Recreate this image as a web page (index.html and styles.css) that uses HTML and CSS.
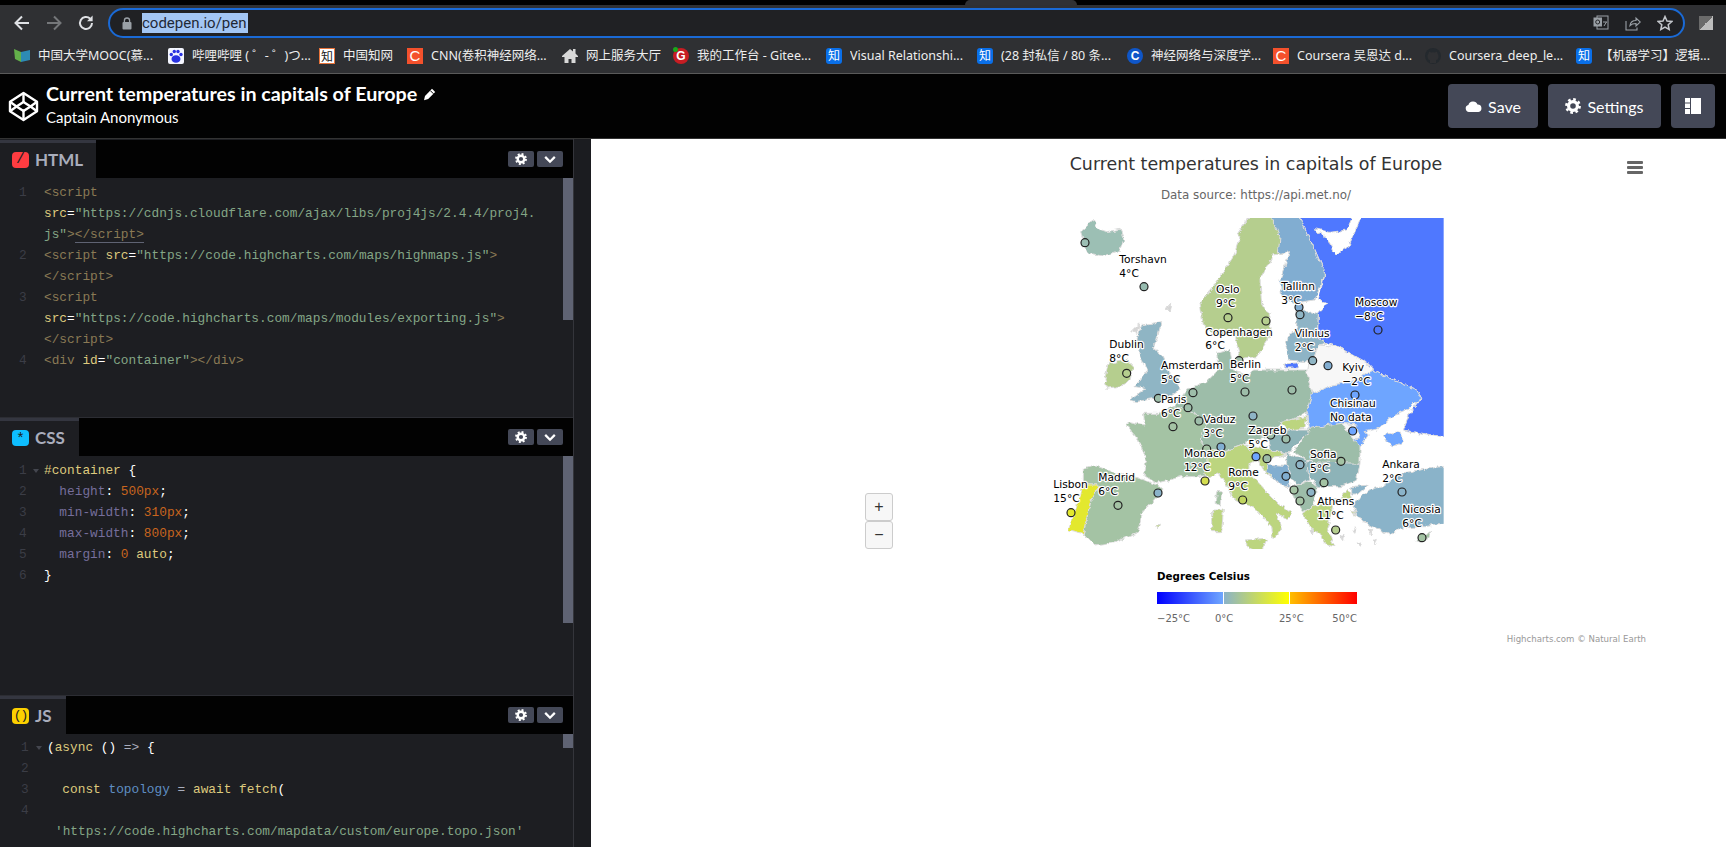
FILE: index.html
```html
<!DOCTYPE html>
<html lang="en">
<head>
<meta charset="utf-8">
<title>CodePen - Current temperatures in capitals of Europe</title>
<link rel="stylesheet" href="styles.css">
</head>
<body>
<svg class="defs" aria-hidden="true">
  <symbol id="gear" viewBox="0 0 16 16">
    <circle cx="8" cy="8" r="4.4" fill="none" stroke="currentColor" stroke-width="3.2"/>
    <circle cx="8" cy="8" r="6.6" fill="none" stroke="currentColor" stroke-width="2.6" stroke-dasharray="2.6 2.58"/>
  </symbol>
  <symbol id="chev" viewBox="0 0 16 10">
    <path d="M2.5 2 8 7.5 13.5 2" fill="none" stroke="currentColor" stroke-width="2.6"/>
  </symbol>
  <filter id="rough" x="-5%" y="-5%" width="110%" height="110%">
    <feTurbulence type="fractalNoise" baseFrequency="0.055" numOctaves="3" seed="4" result="n"/>
    <feDisplacementMap in="SourceGraphic" in2="n" scale="16" xChannelSelector="R" yChannelSelector="G"/>
  </filter>
  <clipPath id="mapclip"><rect x="0" y="234" width="1211" height="993"/></clipPath>
</svg>

<div class="tabstrip"><div class="active-tab"></div></div>

<div class="toolbar">
  <div class="nav-btn"><svg width="18" height="18" viewBox="0 0 18 18"><path d="M16 9H3M9 2.5 2.5 9 9 15.5" fill="none" stroke="#dfe1e5" stroke-width="2"/></svg></div>
  <div class="nav-btn"><svg width="18" height="18" viewBox="0 0 18 18"><path d="M2 9h13M9 2.5 15.5 9 9 15.5" fill="none" stroke="#75777a" stroke-width="2"/></svg></div>
  <div class="nav-btn"><svg width="18" height="18" viewBox="0 0 18 18"><path d="M15 9a6 6 0 1 1-1.8-4.3" fill="none" stroke="#dfe1e5" stroke-width="2"/><path d="M15.6 1.6v5.6H10z" fill="#dfe1e5"/></svg></div>
  <div class="omnibox">
    <svg class="lock" width="10" height="13" viewBox="0 0 10 13"><path d="M2.4 5V3.6a2.6 2.6 0 0 1 5.2 0V5" fill="none" stroke="#9aa0a6" stroke-width="1.3"/><rect x="0.5" y="5" width="9" height="7.5" rx="1" fill="#9aa0a6"/></svg>
    <span class="url">codepen.io/pen</span>
    <svg class="omni-icon" width="16" height="16" viewBox="0 0 16 16"><rect x="4" y="1" width="11" height="13" fill="none" stroke="#9aa0a6"/><rect x="0.5" y="2.5" width="8.5" height="9" fill="#9aa0a6"/><circle cx="4.7" cy="7" r="2" fill="none" stroke="#26272a"/><path d="M10 7h4M11 11l2.500-4" stroke="#9aa0a6"/></svg>
    <svg class="omni-icon" width="16" height="16" viewBox="0 0 16 16"><path d="M5 10.500c.5-3.500 3-5 6-5V3l4.300 4L11 11V8.500c-2.500 0-4.500.4-6 2zM1 6v9h11v-2.500" fill="none" stroke="#9aa0a6" stroke-width="1.100"/></svg>
    <svg class="omni-icon" width="16" height="16" viewBox="0 0 16 16"><path d="m8 1.500 2 4.500 4.800.5-3.600 3.200 1 4.800L8 12.100l-4.200 2.400 1-4.800L1.200 6.500 6 6z" fill="none" stroke="#c4c7cc" stroke-width="1.500"/></svg>
  </div>
  <div class="profile"></div>
</div>

<div class="bookmarks">
  <div class="bm"><svg class="fav" viewBox="0 0 16 16"><path d="M0 1 7 4v10L1 11z" fill="#63b04a"/><path d="M7 4l9-2v10l-9 2z" fill="#2d8bb5"/></svg><span class="bm-text">中国大学MOOC(慕...</span></div>
  <div class="bm"><svg class="fav" viewBox="0 0 16 16"><rect width="16" height="16" rx="2" fill="#f4f6ff"/><ellipse cx="8" cy="11" rx="4.500" ry="3.800" fill="#2932e1"/><circle cx="3.300" cy="6.500" r="1.700" fill="#2932e1"/><circle cx="6.300" cy="3.500" r="1.700" fill="#2932e1"/><circle cx="10" cy="3.500" r="1.700" fill="#2932e1"/><circle cx="13" cy="6.500" r="1.700" fill="#2932e1"/></svg><span class="bm-text">哔哩哔哩 ( ゜- ゜)つ...</span></div>
  <div class="bm"><span class="fav glyph fav-cnki">知</span><span class="bm-text">中国知网</span></div>
  <div class="bm"><span class="fav glyph fav-c">C</span><span class="bm-text">CNN(卷积神经网络...</span></div>
  <div class="bm"><svg class="fav" viewBox="0 0 16 16"><path d="M11 1h2.500v4.500L16 8v1h-2.500v6h-4v-4h-3v4h-4V9H0V8l8-7 3 2.500z" fill="#d8d8d8"/></svg><span class="bm-text">网上服务大厅</span></div>
  <div class="bm"><span class="fav glyph fav-g">G</span><span class="bm-text">我的工作台 - Gitee...</span></div>
  <div class="bm"><span class="fav glyph fav-zhi">知</span><span class="bm-text">Visual Relationshi...</span></div>
  <div class="bm"><span class="fav glyph fav-zhi">知</span><span class="bm-text">(28 封私信 / 80 条...</span></div>
  <div class="bm"><span class="fav glyph fav-cblue">C</span><span class="bm-text">神经网络与深度学...</span></div>
  <div class="bm"><span class="fav glyph fav-c">C</span><span class="bm-text">Coursera 吴恩达 d...</span></div>
  <div class="bm"><svg class="fav" viewBox="0 0 16 16"><circle cx="8" cy="8" r="8" fill="#24292e"/><path d="M5 15v-3c-1.500 0-2.500-1-2.500-4 0-1 .3-1.800 1-2.500L4 3.500l2 1a7 7 0 0 1 4 0l2-1 .5 2c.7.700 1 1.500 1 2.500 0 3-1 4-2.500 4v3z" fill="#2f3033"/></svg><span class="bm-text">Coursera_deep_le...</span></div>
  <div class="bm"><span class="fav glyph fav-zhi">知</span><span class="bm-text">【机器学习】逻辑...</span></div>
</div>

<header class="pen-header">
  <svg class="logo" width="31" height="31" viewBox="0 0 31 31"><g fill="none" stroke="#fff" stroke-width="2.400" stroke-linejoin="round"><path d="M15.500 2 29 10.800v9.400L15.500 29 2 20.200v-9.400z"/><path d="M15.500 11 22.500 15.500 15.500 20 8.500 15.500z"/><path d="M15.500 2v9M15.500 20v9M2 10.800l6.500 4.700M29 10.800l-6.500 4.700M2 20.200l6.500-4.700M29 20.200l-6.500-4.700"/></g></svg>
  <div class="pen-info">
    <h1 class="pen-title">Current temperatures in capitals of Europe <svg class="pencil" width="13" height="13" viewBox="0 0 13 13"><path d="M9 .8 12.200 4l-7 7L1 12.200 2 8z" fill="#fff"/><path d="M7.300 2.600 10.500 5.800" stroke="#000"/></svg></h1>
    <div class="pen-owner">Captain Anonymous</div>
  </div>
  <div class="pen-actions">
    <button class="pen-btn btn-save"><svg width="17" height="11" viewBox="0 0 17 11"><path d="M4 11a3.500 3.500 0 0 1-.6-6.900A4.800 4.800 0 0 1 12.500 3.500 3.800 3.800 0 0 1 13.500 11z" fill="#fff"/></svg>Save</button>
    <button class="pen-btn btn-settings"><svg width="16" height="16" class="icon-white"><use href="#gear"/></svg>Settings</button>
    <button class="pen-btn btn-layout"><svg width="16" height="16" viewBox="0 0 16 16"><path d="M0 0h5v4.500H0zM0 5.500h5v4.500H0zM0 11h5v5H0zM6 0h10v16H6z" fill="#fff"/></svg></button>
  </div>
</header>

<main class="pen-main">
  <section class="editors">
    <div class="panel panel-html">
      <div class="strip">
        <div class="tab tab-html"><span class="lang lang-html">/</span>HTML</div>
        <div class="panel-btns"><span class="mini"><svg width="12" height="12"><use href="#gear"/></svg></span><span class="mini"><svg width="14" height="9"><use href="#chev"/></svg></span></div>
      </div>
      <div class="body">
        <div class="thumb thumb-html"></div>
        <div class="row"><span class="num">1</span><code class="code"><span class="t">&lt;script</span></code></div>
        <div class="row"><span class="num"></span><code class="code"><span class="a">src</span><span class="p">=</span><span class="s">"https://cdnjs.cloudflare.com/ajax/libs/proj4js/2.4.4/proj4.</span></code></div>
        <div class="row"><span class="num"></span><code class="code"><span class="s">js"</span><span class="t">&gt;<span class="match">&lt;/script&gt;</span></span></code></div>
        <div class="row"><span class="num">2</span><code class="code"><span class="t">&lt;script</span> <span class="a">src</span><span class="p">=</span><span class="s">"https://code.highcharts.com/maps/highmaps.js"</span><span class="t">&gt;</span></code></div>
        <div class="row"><span class="num"></span><code class="code"><span class="t">&lt;/script&gt;</span></code></div>
        <div class="row"><span class="num">3</span><code class="code"><span class="t">&lt;script</span></code></div>
        <div class="row"><span class="num"></span><code class="code"><span class="a">src</span><span class="p">=</span><span class="s">"https://code.highcharts.com/maps/modules/exporting.js"</span><span class="t">&gt;</span></code></div>
        <div class="row"><span class="num"></span><code class="code"><span class="t">&lt;/script&gt;</span></code></div>
        <div class="row"><span class="num">4</span><code class="code"><span class="t">&lt;div</span> <span class="a">id</span><span class="p">=</span><span class="s">"container"</span><span class="t">&gt;&lt;/div&gt;</span></code></div>
      </div>
    </div>

    <div class="panel panel-css">
      <div class="strip">
        <div class="tab tab-css"><span class="lang lang-css">*</span>CSS</div>
        <div class="panel-btns"><span class="mini"><svg width="12" height="12"><use href="#gear"/></svg></span><span class="mini"><svg width="14" height="9"><use href="#chev"/></svg></span></div>
      </div>
      <div class="body">
        <div class="thumb thumb-css"></div>
        <div class="row"><span class="num">1</span><span class="fold"></span><code class="code"><span class="a">#container</span> <span class="p">{</span></code></div>
        <div class="row"><span class="num">2</span><code class="code">  <span class="k">height</span><span class="p">:</span> <span class="n">500px</span><span class="p">;</span></code></div>
        <div class="row"><span class="num">3</span><code class="code">  <span class="k">min-width</span><span class="p">:</span> <span class="n">310px</span><span class="p">;</span></code></div>
        <div class="row"><span class="num">4</span><code class="code">  <span class="k">max-width</span><span class="p">:</span> <span class="n">800px</span><span class="p">;</span></code></div>
        <div class="row"><span class="num">5</span><code class="code">  <span class="k">margin</span><span class="p">:</span> <span class="n">0</span> <span class="a">auto</span><span class="p">;</span></code></div>
        <div class="row"><span class="num">6</span><code class="code"><span class="p">}</span></code></div>
      </div>
    </div>

    <div class="panel panel-js">
      <div class="strip">
        <div class="tab tab-js"><span class="lang lang-js">()</span>JS</div>
        <div class="panel-btns"><span class="mini"><svg width="12" height="12"><use href="#gear"/></svg></span><span class="mini"><svg width="14" height="9"><use href="#chev"/></svg></span></div>
      </div>
      <div class="body body-js">
        <div class="thumb thumb-js"></div>
        <div class="row"><span class="num">1</span><span class="fold"></span><code class="code"><span class="p">(</span><span class="a">async</span> <span class="p">()</span> <span class="o">=&gt;</span> <span class="p">{</span></code></div>
        <div class="row"><span class="num">2</span><code class="code"></code></div>
        <div class="row"><span class="num">3</span><code class="code">  <span class="a">const</span> <span class="v">topology</span> <span class="o">=</span> <span class="a">await fetch</span><span class="p">(</span></code></div>
        <div class="row"><span class="num">4</span><code class="code"></code></div>
        <div class="row"><span class="num"></span><code class="code wrapped"><span class="s">'https://code.highcharts.com/mapdata/custom/europe.topo.json'</span></code></div>
      </div>
    </div>
  </section>

  <div class="resizer"></div>

  <section class="preview">
    <div class="chart">
      <button class="menu" aria-label="Chart menu"><span></span><span></span><span></span></button>
      <div class="zoom-ctl"><button class="zoom-btn">+</button><button class="zoom-btn">−</button></div>
      <h2 class="chart-title">Current temperatures in capitals of Europe</h2>
      <div class="chart-sub">Data source: https://api.met.no/</div>

      <svg class="map" width="420" height="331" viewBox="0 234 1260 993">
        <g clip-path="url(#mapclip)">
        <g filter="url(#rough)">
        <g class="lands">
          <path fill="#d6d6d6" d="M590 285 610 255 640 225 620 280ZM378 505 392 490 388 515ZM272 575 300 548 292 580ZM625 225 660 245 640 262 615 250Z"/>
          <path fill="#9cbfb4" d="M122 275 135 265 150 240 165 245 170 265 200 275 240 268 252 300 240 330 190 348 150 340 125 315 130 300Z"/>
          <path fill="#5078ff" d="M770 215H1235V895L1090 870 1110 820 1145 775 1130 750 1060 720 1000 690 975 665 895 620 860 610 832 590 835 520 860 490 835 480 855 400 825 330Z"/>
          <path fill="#fff" stroke="#fff" d="M820 265 870 277 920 270 945 215 972 215 945 275 925 320 885 345 865 300Z"/>
          <path fill="#b5ce8e" d="M590 285 640 220 690 215 730 290 752 335 700 345 660 420 665 490 690 530 690 590 650 650 600 655 590 610 585 585 530 590 490 555 480 490 520 440 580 350 600 290Z"/>
          <path fill="#81add1" d="M685 215H770L825 330 855 400 825 480 760 490 725 470 720 420 745 350 752 335 715 340 720 290Z"/>
          <path fill="#8eb4c6" d="M770 510 835 520 832 590 860 610 835 615 820 660 800 665 745 660 735 620 745 590 770 570Z"/>
          <path fill="#5078ff" d="M730 672 775 668 775 684 735 684Z"/>
          <path fill="#f7f7f7" stroke="#f7f7f7" d="M835 615 895 620 975 665 1000 690 950 720 880 735 815 760 805 720 800 690 805 660 820 660Z"/>
          <path fill="#8fb5c4" d="M305 555 365 545 350 600 340 625 370 650 385 700 415 720 420 750 390 770 345 775 290 785 270 780 320 745 285 740 320 690 300 650 290 600Z"/>
          <path fill="#b5ce8e" d="M205 670 260 660 280 680 270 720 255 735 200 745 195 715Z"/>
          <path fill="#9dbda9" d="M535 690 530 640 570 630 580 690 630 705 640 690H800L805 720 815 760 800 820 720 855 680 890 620 905 610 915 550 935 500 925 480 900 500 850 480 830 440 810 400 800 440 750 470 740 500 725Z"/>
        </g>
        <g class="lands" transform="translate(0,690)">
          <path fill="#6ea5ff" d="M815 70 880 45 950 30 1000 0 1060 30 1130 60 1145 85 1110 115 1060 135 1020 175 975 185 985 195 960 232 945 232 945 200 950 165 905 160 805 178 800 130Z"/>
          <path fill="#f7f7f7" stroke="#f7f7f7" d="M905 160 950 165 958 205 935 205Z"/>
          <path fill="#6ea5ff" d="M1030 195 1075 185 1090 215 1060 230 1040 215Z"/>
          <path fill="#a4c3a4" d="M310 130 355 130 400 110 440 120 480 140 500 160 480 210 500 235 505 280 510 315 470 320 420 320 390 330 350 340 310 315 320 270 295 210 260 165 270 155 315 165Z"/>
          <path fill="#a4c3a4" d="M130 295 160 285 230 310 300 325 350 345 370 360 340 395 310 420 290 490 225 515 165 525 130 490 150 400 175 345 130 345Z"/>
          <path fill="#e3e82e" d="M130 345H175L150 400 130 490 85 480 110 410Z"/>
          <path fill="#bcd57f" d="M500 235 550 245 610 225 650 235 665 260 630 280 630 310 680 365 720 405 755 430 740 445 710 430 725 480 700 505 695 470 650 420 580 385 540 310 510 320 490 310 505 280Z"/>
          <path fill="#bcd57f" d="M615 510 680 505 665 545 630 540ZM515 420 550 420 545 485 515 485Z"/>
          <path fill="#a4c3a4" d="M530 365 545 365 540 405 525 400Z"/>
          <path fill="#bcd57f" d="M720 155 800 140 795 175 740 180Z"/>
          <path fill="#8eb4b8" d="M680 190 740 180 810 180 760 230 740 255 690 240Z"/>
          <path fill="#bcd57f" d="M615 225 670 235 740 255 680 265 680 290 745 355 680 310 650 260Z"/>
          <path fill="#9dbda9" d="M810 175 905 160 960 230 960 280 880 285 800 270 760 245Z"/>
          <path fill="#8db3b8" d="M740 250 800 270 810 330 770 345 740 300Z"/>
          <path fill="#8db3b8" d="M800 275 960 280 950 330 900 350 830 350 805 310Z"/>
          <path fill="#82aed0" d="M680 285 745 290 750 350 715 340 680 300Z"/>
          <path fill="#9dbda9" d="M750 350 810 335 830 350 820 410 790 425 760 380Z"/>
          <path fill="#bcd57f" d="M820 410 900 385 925 360 935 385 880 395 870 450 860 480 885 530 860 525 840 490 810 470 790 430Z"/>
          <path fill="#bcd57f" d="M935 425 950 425 945 440ZM350 470 358 465 355 480Z"/>
          <path fill="#d6d6d6" d="M900 500 912 495 908 512ZM935 480 948 472 945 490ZM985 480 998 478 992 495ZM1000 510 1012 505 1005 525ZM950 520 965 515 960 530ZM810 480 822 478 815 495Z"/>
          <path fill="#8ab3c9" d="M940 395 1000 355 1030 350 1080 310 1235 285V460L1150 470 1080 475 1050 495 1000 470 950 440ZM935 350 985 345 950 375 935 375Z"/>
          <path fill="#a4c3a4" d="M1125 515 1165 490 1175 480 1160 510 1140 520Z"/>
        </g>
        </g>
        </g>
        <g class="pins">
          <circle cx="135" cy="308" fill="#9cbfb4"/><circle cx="312" cy="440" fill="#97bcb0"/>
          <circle cx="564" cy="533" fill="#b5ce8e"/><circle cx="678" cy="543" fill="#b5ce8e"/>
          <circle cx="777" cy="502" fill="#81add1"/><circle cx="780" cy="524" fill="#8fb5c4"/>
          <circle cx="1014" cy="570" fill="#5078ff"/><circle cx="818" cy="662" fill="#8fb5c4"/>
          <circle cx="864" cy="677" fill="#81add1"/><circle cx="260" cy="700" fill="#b5ce8e"/>
          <circle cx="597" cy="662" fill="#9dbda9"/>
        </g>
        <g class="pins" transform="translate(0,690)">
          <circle cx="459" cy="68" fill="#9dbda9"/><circle cx="615" cy="66" fill="#9dbda9"/>
          <circle cx="756" cy="60" fill="#9dbda9"/><circle cx="945" cy="75" fill="#6ea5ff"/>
          <circle cx="355" cy="85" fill="#9dbda9"/><circle cx="444" cy="113" fill="#9dbda9"/>
          <circle cx="477" cy="153" fill="#9dbda9"/><circle cx="639" cy="138" fill="#8eb4c6"/>
          <circle cx="399" cy="170" fill="#a4c3a4"/><circle cx="938" cy="183" fill="#6ea5ff"/>
          <circle cx="738" cy="207" fill="#9dbda9"/><circle cx="692" cy="195" fill="#9dbda9"/>
          <circle cx="500" cy="237" fill="#a4c3a4"/><circle cx="543" cy="231" fill="#81add1"/>
          <circle cx="648" cy="260" fill="#6ea5ff"/><circle cx="681" cy="266" fill="#9dbda9"/>
          <circle cx="903" cy="274" fill="#a4c3a4"/><circle cx="780" cy="284" fill="#8eb4c6"/>
          <circle cx="738" cy="319" fill="#81add1"/><circle cx="852" cy="338" fill="#a4c3a4"/>
          <circle cx="495" cy="333" fill="#d4dd4f"/><circle cx="1086" cy="366" fill="#8ab3c9"/>
          <circle cx="354" cy="369" fill="#8ab3c9"/><circle cx="813" cy="367" fill="#8eb4c6"/>
          <circle cx="762" cy="360" fill="#a4c3a4"/><circle cx="780" cy="393" fill="#a4c3a4"/>
          <circle cx="608" cy="390" fill="#c0d560"/><circle cx="234" cy="406" fill="#a4c3a4"/>
          <circle cx="93" cy="428" fill="#e3e82e"/><circle cx="887" cy="480" fill="#b5ce8e"/>
          <circle cx="1146" cy="503" fill="#a4c3a4"/>
        </g>
        <g class="labels">
          <text x="238" y="368">Torshavn</text><text x="238" y="410">4°C</text>
          <text x="528" y="460">Oslo</text><text x="528" y="502">9°C</text>
          <text x="724" y="450">Tallinn</text><text x="724" y="492">3°C</text>
          <text x="945" y="497">Moscow</text><text x="945" y="539">−8°C</text>
          <text x="496" y="587">Copenhagen</text><text x="496" y="628">6°C</text>
          <text x="764" y="590">Vilnius</text><text x="764" y="632">2°C</text>
          <text x="208" y="625">Dublin</text><text x="208" y="667">8°C</text>
          <text x="363" y="686">Amsterdam</text><text x="363" y="728">5°C</text>
          <text x="570" y="683">Berlin</text><text x="570" y="725">5°C</text>
          <text x="907" y="692">Kyiv</text><text x="907" y="734">−2°C</text>
        </g>
        <g class="labels" transform="translate(0,690)">
          <text x="363" y="98">Paris</text><text x="363" y="140">6°C</text>
          <text x="490" y="158">Vaduz</text><text x="490" y="200">3°C</text>
          <text x="870" y="110">Chisinau</text><text x="870" y="152">No data</text>
          <text x="625" y="193">Zagreb</text><text x="625" y="235">5°C</text>
          <text x="432" y="260">Monaco</text><text x="432" y="302">12°C</text>
          <text x="810" y="265">Sofia</text><text x="810" y="307">5°C</text>
          <text x="1027" y="293">Ankara</text><text x="1027" y="335">2°C</text>
          <text x="565" y="317">Rome</text><text x="565" y="359">9°C</text>
          <text x="175" y="332">Madrid</text><text x="175" y="374">6°C</text>
          <text x="40" y="355">Lisbon</text><text x="40" y="397">15°C</text>
          <text x="832" y="406">Athens</text><text x="832" y="448">11°C</text>
          <text x="1087" y="430">Nicosia</text><text x="1087" y="472">6°C</text>
        </g>
      </svg>

      <div class="legend">
        <div class="legend-title">Degrees Celsius</div>
        <div class="legend-bar"></div>
        <div class="legend-labels"><span class="ll ll-a">−25°C</span><span class="ll ll-b">0°C</span><span class="ll ll-c">25°C</span><span class="ll ll-d">50°C</span></div>
      </div>
      <div class="credits">Highcharts.com © Natural Earth</div>
    </div>
  </section>
</main>
</body>
</html>
```
FILE: styles.css
```css
* { box-sizing: border-box; }
html, body { margin: 0; height: 847px; overflow: hidden; background: #000; }
body { font-family: "Noto Sans", "Noto Sans CJK SC", sans-serif; color: #fff; }
.defs { position: absolute; width: 0; height: 0; }

/* browser chrome */
.tabstrip { height: 5px; background: #000; }
.active-tab { width: 112px; height: 5px; margin-left: 965px; background: #303134; border-radius: 6px 6px 0 0; }
.toolbar { height: 35px; background: #2f3033; display: flex; align-items: flex-start; padding-left: 6px; }
.nav-btn { width: 32px; height: 30px; margin-top: 3px; display: flex; align-items: center; justify-content: center; }
.omnibox { flex: 1; height: 30px; margin: 3px 0 0 6px; border: 2px solid #1a6ad6; border-radius: 15px; background: #202124; display: flex; align-items: center; padding: 0 10px 0 12px; }
.lock { flex: none; margin-right: 10px; }
.url { flex: 0 0 106px; font: 15px/20px Roboto, sans-serif; color: #1f2937; background: #a3c6f4; white-space: nowrap; margin-right: auto; }
.omni-icon { flex: none; margin-left: 16px; }
.profile { width: 14px; height: 14px; margin: 11px 13px 0 14px; background: linear-gradient(135deg, #6b6b6b 50%, #bdbdbd 50%); }

.bookmarks { height: 34px; background: #2f3033; border-bottom: 1px solid #5a5a5a; padding: 0 0 1px 14px; display: grid; grid-template-columns: 154px 151px 88px 155px 111px 153px 151px 150px 146px 152px 151px 136px; align-items: center; }
.bm { display: flex; align-items: center; gap: 8px; min-width: 0; }
.fav { flex: none; width: 16px; height: 16px; }
.glyph { display: flex; align-items: center; justify-content: center; font-size: 12px; line-height: 16px; color: #fff; }
.fav-zhi { background: #0a6fe8; border-radius: 3px; }
.fav-c { background: #f4512c; font-family: "Liberation Sans", sans-serif; font-size: 15px; }
.fav-cblue { background: #0f56c8; border-radius: 50%; font-family: "Liberation Sans", sans-serif; font-weight: 700; font-size: 12px; }
.fav-g { position: relative; background: #c71d23; border-radius: 50%; font-family: "Liberation Sans", sans-serif; font-weight: 700; font-size: 12px; }
.fav-g::before { content: ""; position: absolute; left: 0; top: -1px; width: 5px; height: 5px; border-radius: 50%; background: #1aa81a; }
.fav-cnki { background: #fff; color: #222; border: 1px solid #e8743b; font-family: "Noto Sans CJK SC", sans-serif; }
.bm-text { font: 12.500px/16px "Noto Sans", "Noto Sans CJK SC", sans-serif; color: #eee; white-space: nowrap; overflow: hidden; }

/* pen header */
.pen-header { height: 65px; background: #020202; border-bottom: 1px solid #333; display: flex; padding-left: 8px; }
.logo { flex: none; margin-top: 17px; }
.pen-info { margin-left: 7px; padding-top: 7px; }
.pen-title { margin: 0; font: 700 19.700px/26px Lato, sans-serif; color: #fff; white-space: nowrap; }
.pencil { margin-left: 1px; }
.pen-owner { font: 15px/20px Lato, sans-serif; color: #fff; }
.pen-actions { margin-left: auto; display: flex; gap: 10px; padding: 10px 11px 0 0; }
.pen-btn { height: 44px; border: 0; border-radius: 4px; background: #444857; color: #fff; font: 16px Lato, sans-serif; display: flex; align-items: center; justify-content: center; gap: 6px; padding: 0; }
.btn-save { width: 90px; }
.btn-settings { width: 113px; }
.btn-layout { width: 44px; }

/* main */
.pen-main { height: 708px; display: flex; }
.editors { flex: 0 0 573px; display: grid; grid-template-rows: 278px 278px 152px; background: #1d1e22; }
.panel { display: flex; flex-direction: column; border-top: 1px solid #2c2d33; min-height: 0; overflow: hidden; }
.panel-html { border-top: 0; padding-top: 1px; }
.strip { flex: none; height: 38px; background: #020202; display: flex; align-items: flex-start; justify-content: space-between; padding-right: 10px; }
.tab { height: 38px; background: #1d1e22; border-top: 3px solid #343640; display: flex; align-items: center; padding: 0 0 2px 12px; gap: 6px; font: 700 17px Lato, sans-serif; color: #a9adbc; }
.tab-html { width: 96px; }
.tab-css { width: 79px; }
.tab-js { width: 66px; }
.lang { width: 17px; height: 16px; border-radius: 4px; display: flex; align-items: center; justify-content: center; font: 400 15px/16px "Liberation Mono", monospace; color: #1d1e22; }
.lang-html { background: #ff3c41; }
.lang-css { background: #0ebeff; padding-top: 4px; }
.lang-js { background: #fcd000; letter-spacing: -1px; font-size: 13px; }
.panel-btns { display: flex; gap: 3px; padding-top: 11px; }
.mini { width: 26px; height: 16px; border-radius: 2px; background: #444857; color: #fff; display: flex; align-items: center; justify-content: center; }

.body { flex: 1; position: relative; background: #1d1e22; padding-top: 4px; min-height: 0; }
.body-js { padding-top: 3px; }
.thumb { position: absolute; top: 0; right: 0; width: 10px; background: #5f6373; }
.thumb-html { height: 142px; }
.thumb-css { height: 167px; }
.thumb-js { height: 14px; }
.row { height: 21px; display: flex; align-items: center; position: relative; font: 12.800px/21px "Liberation Mono", monospace; }
.num { flex: none; width: 44px; padding-left: 19px; color: #3b3d46; }
.fold { position: absolute; left: 33px; top: 9px; width: 0; height: 0; border: 3px solid transparent; border-top: 4px solid #44464f; border-bottom: 0; }
.code { font: inherit; white-space: pre; color: #fff; }
.body-js .num { width: 47px; padding-left: 21px; }
.body-js .fold { left: 36px; }
.wrapped { margin-left: 8px; }
.t { color: #8a7a55; }
.a { color: #ddca7e; }
.p { color: #fff; }
.s { color: #84a686; }
.k { color: #766e9c; }
.n { color: #c8651e; }
.o { color: #a9adbc; }
.v { color: #5f8fc4; }
.match { border-bottom: 1px solid #5f6373; }

.resizer { flex: 0 0 18px; background: #1b1c20; border-left: 1px solid #34353b; }

/* preview */
.preview { flex: 1; background: #fff; overflow: hidden; min-width: 0; }
.chart { width: 800px; margin-left: 265px; padding-top: 13px; position: relative; height: 100%; }
.chart-title { margin: 0; text-align: center; font: 400 17.400px/24px "DejaVu Sans", sans-serif; color: #333; white-space: nowrap; }
.chart-sub { margin-top: 11px; text-align: center; font: 11.900px/16px "DejaVu Sans", sans-serif; color: #666; }
.map { display: block; margin: 15px 0 0 184px; }
.lands path { stroke: #dcdcdc; stroke-width: 3; stroke-linejoin: round; }
.pins circle { r: 12px; stroke: #222; stroke-width: 3.600; }
.labels text { font: 32px "DejaVu Sans", sans-serif; fill: #000; stroke: #fff; stroke-width: 7; paint-order: stroke; stroke-linejoin: round; }
.legend { width: 200px; margin: 19px 0 0 301px; color: #333; }
.legend-title { font: 700 10.300px/16px "DejaVu Sans", sans-serif; color: #000; white-space: nowrap; }
.legend-bar { height: 12px; margin-top: 8px; background: linear-gradient(90deg, #0000ff 0, #6ea5ff 32.800%, #fff 32.800%, #fff 33.300%, #8ab2ca 33.300%, #ffff00 65.800%, #fff 65.800%, #fff 66.300%, #ffc000 66.300%, #ff0000 100%); }
.legend-labels { height: 14px; margin-top: 8px; position: relative; font: 10px/14px "DejaVu Sans", sans-serif; color: #666; }
.ll { position: absolute; top: 0; white-space: nowrap; }
.ll-a { left: 0; }
.ll-b { left: 58px; }
.ll-c { left: 122px; }
.ll-d { right: 0; }
.credits { width: 790px; margin-top: 7px; text-align: right; font: 8.600px/12px "DejaVu Sans", sans-serif; color: #999; }
.menu { position: absolute; top: 22px; left: 771px; width: 16px; padding: 0; border: 0; background: none; display: flex; flex-direction: column; gap: 2px; }
.menu span { display: block; height: 3px; background: #666; border-radius: 1px; }
.zoom-ctl { position: absolute; left: 9px; top: 354px; width: 28px; display: flex; flex-direction: column; }
.zoom-btn { height: 28px; padding: 0; border: 1px solid #ccc; border-radius: 3px; background: #f7f7f7; color: #333; font: 16px/1 "Liberation Sans", sans-serif; }
```
